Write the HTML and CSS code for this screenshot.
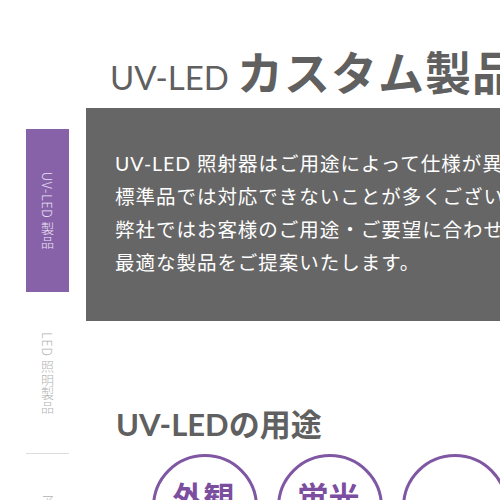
FILE: index.html
```html
<!DOCTYPE html>
<html lang="ja">
<head>
<meta charset="utf-8">
<title>UV-LED カスタム製品</title>
<link rel="stylesheet" href="styles.css">
</head>
<body>
<div class="page">
  <nav class="side">
    <a class="side-item active"><span>UV-LED 製品</span></a>
    <a class="side-item"><span>LED 照明製品</span></a>
    <a class="side-item sep"><span>アクセサリー</span></a>
  </nav>
  <main class="main">
    <h1 class="title"><span class="title-en">UV-LED</span><span class="title-ja">カスタム製品</span></h1>
    <div class="intro">
      <p>UV-LED 照射器はご用途によって仕様が異なるため、<br>標準品では対応できないことが多くございます。<br>弊社ではお客様のご用途・ご要望に合わせて<br>最適な製品をご提案いたします。</p>
    </div>
    <h2 class="heading">UV-LEDの用途</h2>
    <ul class="uses">
      <li class="use"><span>外観<br>検査</span></li>
      <li class="use"><span>蛍光<br>検査</span></li>
      <li class="use use-low"><span>硬化</span></li>
    </ul>
  </main>
</div>
</body>
</html>
```

FILE: styles.css
```css
html, body {
  margin: 0;
  padding: 0;
  background: #ffffff;
  overflow: hidden;
}

.page {
  display: flex;
  width: 900px;
  padding-left: 26px;
  font-family: "Lato", "Noto Sans CJK JP", sans-serif;
}

.side {
  flex: 0 0 43px;
  margin-top: 129px;
  display: flex;
  flex-direction: column;
}

.side-item {
  height: 161px;
  display: flex;
  align-items: center;
  justify-content: center;
  text-decoration: none;
}

.side-item span {
  writing-mode: vertical-rl;
  font-family: "Noto Sans CJK JP", sans-serif;
  font-size: 13px;
  font-weight: 300;
  letter-spacing: 0.5px;
  color: #b3b3b3;
  white-space: nowrap;
}

.side-item.active {
  height: 163px;
  background: #8862a9;
}

.side-item.active span {
  color: #ece2f4;
}

.side-item.sep {
  border-top: 1px solid #dddddd;
}

.main {
  flex: 0 0 800px;
  margin-left: 17px;
}

.title {
  margin: 0 0 8px;
  padding: 40px 0 0 24px;
  height: 60px;
  line-height: 60px;
  color: #606060;
  font-weight: normal;
  white-space: nowrap;
}

.title-en {
  font-family: "Lato", sans-serif;
  font-size: 33px;
  font-weight: 400;
}

.title-ja {
  font-family: "Noto Sans CJK JP", sans-serif;
  font-size: 46px;
  font-weight: 700;
  letter-spacing: 1px;
  margin-left: 8px;
}

.intro {
  width: 700px;
  background: #666666;
  padding: 39px 0 42px 29px;
}

.intro p {
  margin: 0;
  color: #ffffff;
  font-size: 19.5px;
  line-height: 33px;
  letter-spacing: 0.05em;
  white-space: nowrap;
}

.heading {
  margin: 83px 0 0;
  padding-left: 30px;
  font-size: 31px;
  line-height: 40px;
  font-weight: 700;
  color: #606060;
  white-space: nowrap;
}

.uses {
  list-style: none;
  margin: 10px 0 0 66px;
  padding: 0;
  display: flex;
  gap: 19px;
}

.use {
  box-sizing: border-box;
  width: 106px;
  height: 106px;
  border: 3px solid #7f57a2;
  border-radius: 50%;
  display: flex;
  justify-content: center;
  padding-top: 21px;
  text-align: center;
}

.use span {
  font-family: "Noto Sans CJK JP", sans-serif;
  font-size: 31px;
  line-height: 36px;
  font-weight: 700;
  color: #7c4e9f;
  margin-left: -3px;
}

.use-low {
  padding-top: 50px;
}
```
